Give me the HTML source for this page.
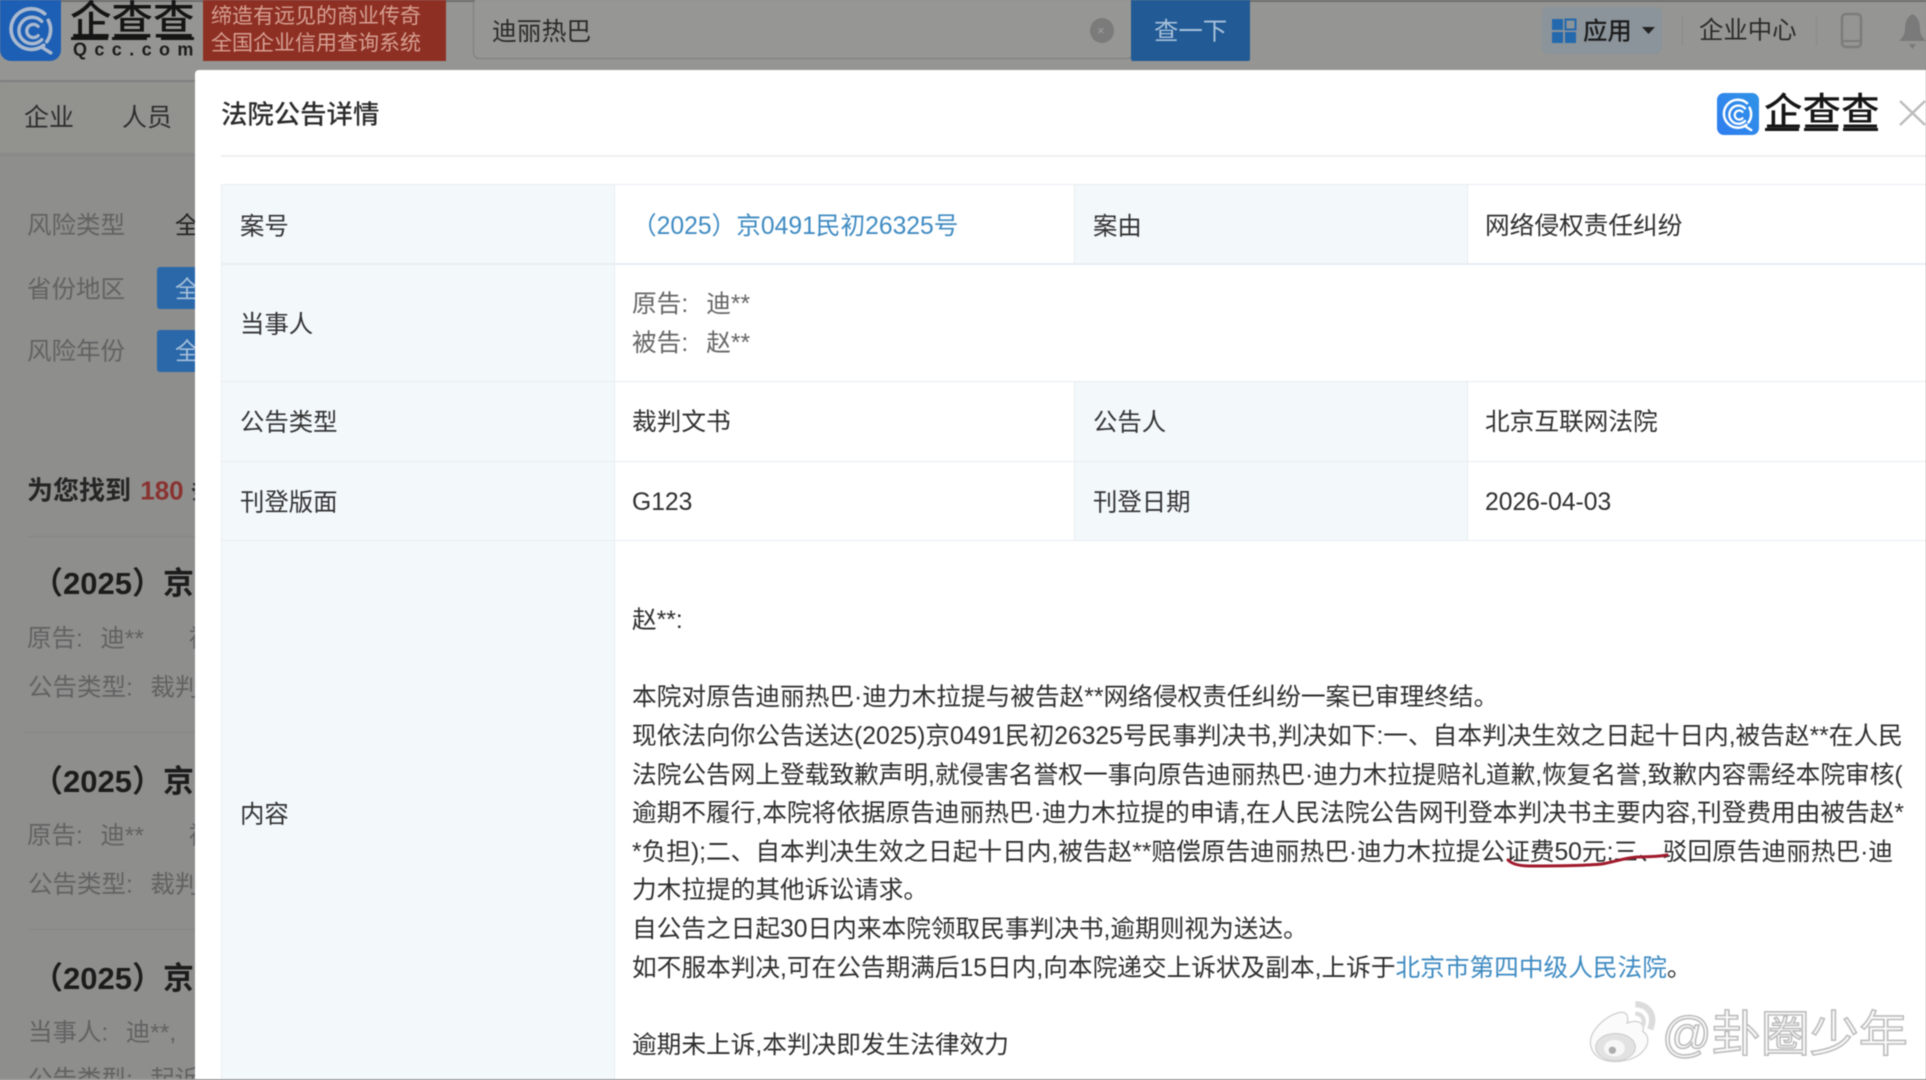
<!DOCTYPE html>
<html lang="zh-CN">
<head>
<meta charset="utf-8">
<title>法院公告详情</title>
<style>
html,body{margin:0;padding:0;}
body{width:1926px;height:1080px;overflow:hidden;position:relative;background:#8e8e8d;font-family:"Liberation Sans","Noto Sans CJK SC",sans-serif;}
#wrap{position:absolute;left:0;top:0;width:1926px;height:1080px;overflow:hidden;filter:blur(.45px);}
.t{position:absolute;white-space:nowrap;line-height:1;transform:translateY(calc(-50% + 4.5px));}
.b{position:absolute;}
.g{font-size:24.500px;color:#626262;}
.g i{font-style:normal;display:inline-block;width:17.500px;}
.h{font-size:31px;font-weight:700;color:#1c1c1c;}
.l{font-size:24.400px;color:#333;}
.c{font-size:24.680px;color:#2f2f2f;left:632px;}
.c i{font-style:normal;display:inline-block;width:18px;}
</style>
</head>
<body>
<svg width="0" height="0" style="position:absolute">
<symbol id="logo" viewBox="0 0 60 60">
<g fill="none" stroke-linecap="round">
<path d="M42 14.5A20 20 0 1 0 41 45.5 M45.5 21A20 20 0 0 1 44 42" stroke-width="3.6"/>
<path d="M40 48L48 53" stroke-width="3.4"/>
<path d="M39 22A13 13 0 1 0 39 40" stroke-width="3.4"/>
<path d="M35.500 27A6.500 6.500 0 1 0 35.500 36" stroke-width="3.2"/>
</g>
</symbol>
<linearGradient id="bl" x1="0" y1="1" x2="1" y2="0"><stop offset="0" stop-color="#2f7df0"/><stop offset="1" stop-color="#2f93e6"/></linearGradient>
</svg>
<div id="wrap">
<!-- background page -->
<div class="b" style="left:0;top:0;width:1926px;height:80px;background:#959593;"></div>
<div class="b" style="left:0;top:0;width:1926px;height:2px;background:#6f6f6f;"></div>
<div class="b" style="left:0;top:80px;width:1926px;height:2px;background:#7f7f7f;"></div>
<div class="b" style="left:0;top:82px;width:1926px;height:71px;background:#92928f;"></div>
<div class="b" style="left:0;top:153px;width:1926px;height:3px;background:#8a8a89;"></div>

<svg class="b" style="left:0;top:0;color:#b6c6dc" width="61" height="61" viewBox="0 0 60 60">
<rect x="0" y="-14" width="60" height="74" rx="11" fill="#1d5fb4"/>
<use href="#logo" stroke="#aab9cf" x="2" y="-1" width="60" height="60"/>
</svg>
<span class="t" style="left:70px;top:15.500px;font-size:41.500px;font-weight:500;color:#151515;">企查查</span>
<div class="b" style="left:71px;top:37px;width:37px;height:3px;background:#151515;"></div>
<div class="b" style="left:112px;top:37px;width:35px;height:3px;background:#151515;"></div>
<div class="b" style="left:161px;top:37px;width:33px;height:3px;background:#151515;"></div>
<span class="t" style="left:73px;top:44.500px;font-size:18px;font-weight:700;letter-spacing:7.400px;color:#1c1c1c;">Qcc.com</span>
<div class="b" style="left:203px;top:0;width:243px;height:61px;background:#8e2f23;"></div>
<span class="t" style="left:211px;top:12px;font-size:21px;color:#d6a092;">缔造有远见的商业传奇</span>
<span class="t" style="left:211px;top:39px;font-size:21px;color:#d6a092;">全国企业信用查询系统</span>
<div class="b" style="left:473px;top:-2px;width:660px;height:61px;box-sizing:border-box;border:1px solid #7f7f7f;border-radius:6px;background:#969694;"></div>
<span class="t" style="left:492px;top:29px;font-size:24.800px;color:#2a2a2a;">迪丽热巴</span>
<div class="b" style="left:1090px;top:18px;width:24px;height:25px;border-radius:50%;background:#7b7b7b;"></div>
<span class="t" style="left:1097px;top:25.500px;font-size:13px;color:#a0a0a0;">×</span>
<div class="b" style="left:1131px;top:0;width:119px;height:61px;background:#215a95;border-radius:0 0 2px 2px;"></div>
<span class="t" style="left:1154px;top:27.500px;font-size:24.400px;color:#a9c1da;">查一下</span>

<div class="b" style="left:1542px;top:7px;width:120px;height:47px;border-radius:6px;background:#8b949b;"></div>
<svg class="b" style="left:1551px;top:18px" width="26" height="25" viewBox="0 0 26 25">
<rect x="1" y="1" width="11" height="11" fill="#2468ad"/><rect x="14.500" y="1.500" width="10" height="10" fill="none" stroke="#2468ad" stroke-width="2"/>
<rect x="1" y="14" width="11" height="11" fill="#2468ad"/><rect x="14" y="14" width="11" height="11" fill="#2468ad"/>
</svg>
<span class="t" style="left:1583px;top:27.500px;font-size:24.400px;font-weight:500;color:#1c1c1c;">应用</span>
<svg class="b" style="left:1641px;top:26px" width="15" height="9"><path d="M1 1H14L7.500 8Z" fill="#222"/></svg>
<div class="b" style="left:1682px;top:16px;width:1px;height:30px;background:#8a8a8a;"></div>
<span class="t" style="left:1699px;top:26.500px;font-size:24.400px;color:#2b2b2b;">企业中心</span>
<div class="b" style="left:1816px;top:16px;width:1px;height:30px;background:#8a8a8a;"></div>
<svg class="b" style="left:1840px;top:12px" width="23" height="37" viewBox="0 0 23 37"><rect x="2" y="2" width="19" height="33" rx="4" fill="none" stroke="#7c7c7c" stroke-width="2.500"/><path d="M3 29H20" stroke="#7c7c7c" stroke-width="2"/></svg>
<svg class="b" style="left:1899px;top:13px" width="27" height="37" viewBox="0 0 27 37"><path d="M13.500 1C8 4 6 9 6 16C6 21 4 24 0 28H27C23 24 21 21 21 16C21 9 19 4 13.500 1ZM10 31H17L13.500 36Z" fill="#7a7a7a"/></svg>

<span class="t" style="left:24px;top:114px;font-size:25px;color:#2e2e2e;">企业</span>
<span class="t" style="left:122px;top:114px;font-size:25px;color:#2e2e2e;">人员</span>
<span class="t g" style="left:27px;top:222px;">风险类型</span>
<span class="t" style="left:175px;top:222px;font-size:24px;color:#222;">全</span>
<span class="t g" style="left:27px;top:286px;">省份地区</span>
<div class="b" style="left:157px;top:267px;width:40px;height:42px;border-radius:3px;background:#2a68a9;"></div>
<span class="t" style="left:175px;top:286px;font-size:24px;color:#a5bfda;">全</span>
<span class="t g" style="left:27px;top:348px;">风险年份</span>
<div class="b" style="left:157px;top:330px;width:40px;height:42px;border-radius:3px;background:#2a68a9;"></div>
<span class="t" style="left:175px;top:348px;font-size:24px;color:#a5bfda;">全</span>

<span class="t" style="left:27px;top:485.500px;font-size:26px;font-weight:700;color:#252525;">为您找到 <span style="color:#8a3330;margin-left:2px;">180</span> 条</span>
<div class="b" style="left:28px;top:536px;width:170px;height:1px;background:#858585;"></div>
<span class="t h" style="left:32px;top:578.500px;">（2025）京</span>
<span class="t g" style="left:27px;top:635px;">原告:<i></i>迪**</span>
<span class="t g" style="left:189px;top:635px;">被</span>
<span class="t g" style="left:28px;top:684px;">公告类型:<i></i>裁判</span>
<div class="b" style="left:25px;top:732px;width:170px;height:1px;background:#858585;"></div>
<span class="t h" style="left:32px;top:776.500px;">（2025）京</span>
<span class="t g" style="left:27px;top:832px;">原告:<i></i>迪**</span>
<span class="t g" style="left:189px;top:832px;">被</span>
<span class="t g" style="left:28px;top:881px;">公告类型:<i></i>裁判</span>
<div class="b" style="left:28px;top:929px;width:170px;height:1px;background:#858585;"></div>
<span class="t h" style="left:32px;top:973.500px;">（2025）京</span>
<span class="t g" style="left:28px;top:1029px;">当事人:<i></i>迪**,</span>
<span class="t g" style="left:28px;top:1076px;">公告类型:<i></i>起诉</span>

<!-- modal -->
<div class="b" style="left:195px;top:70px;width:1740px;height:1020px;background:#fff;border-radius:4px 0 0 0;overflow:hidden;"></div>
<span class="t" style="left:221px;top:109.500px;font-size:26.400px;font-weight:500;color:#2b2b2b;">法院公告详情</span>
<svg class="b" style="left:1717px;top:93px" width="42" height="42" viewBox="0 0 60 60">
<rect width="60" height="60" rx="10" fill="url(#bl)"/><use href="#logo" stroke="#fff" x="1" y="0" width="60" height="60"/>
</svg>
<span class="t" style="left:1764px;top:108.500px;font-size:38.500px;font-weight:500;color:#161616;">企查查</span>
<div class="b" style="left:1765px;top:128px;width:34px;height:3px;background:#161616;"></div>
<div class="b" style="left:1804px;top:128px;width:34px;height:3px;background:#161616;"></div>
<div class="b" style="left:1843px;top:128px;width:35px;height:3px;background:#161616;"></div>
<svg class="b" style="left:1898px;top:99px" width="28" height="27"><path d="M2 2L27 26M27 2L2 26" stroke="#bdbdbd" stroke-width="2.500"/></svg>
<div class="b" style="left:221px;top:155px;width:1705px;height:2px;background:#eeeeee;"></div>

<!-- table -->
<div class="b" style="left:221px;top:184px;width:393px;height:896px;background:#f3f8fb;"></div>
<div class="b" style="left:1075px;top:184px;width:392px;height:79px;background:#f3f8fb;"></div>
<div class="b" style="left:1075px;top:381px;width:392px;height:159px;background:#f3f8fb;"></div>
<div class="b" style="left:221px;top:184px;width:1705px;height:1px;background:#e8edf1;"></div>
<div class="b" style="left:221px;top:263px;width:1705px;height:2px;background:#e8edf1;"></div>
<div class="b" style="left:221px;top:381px;width:1705px;height:1px;background:#e8edf1;"></div>
<div class="b" style="left:221px;top:461px;width:1705px;height:1px;background:#e8edf1;"></div>
<div class="b" style="left:221px;top:540px;width:1705px;height:1px;background:#e8edf1;"></div>
<div class="b" style="left:221px;top:184px;width:1px;height:896px;background:#e8edf1;"></div>
<div class="b" style="left:614px;top:184px;width:1px;height:896px;background:#e8edf1;"></div>
<div class="b" style="left:1074px;top:184px;width:1px;height:79px;background:#e8edf1;"></div>
<div class="b" style="left:1467px;top:184px;width:1px;height:79px;background:#e8edf1;"></div>
<div class="b" style="left:1074px;top:381px;width:1px;height:159px;background:#e8edf1;"></div>
<div class="b" style="left:1467px;top:381px;width:1px;height:159px;background:#e8edf1;"></div>

<span class="t l" style="left:240px;top:223px;">案号</span>
<span class="t l" style="left:240px;top:321px;">当事人</span>
<span class="t l" style="left:240px;top:419px;">公告类型</span>
<span class="t l" style="left:240px;top:499px;">刊登版面</span>
<span class="t l" style="left:240px;top:811px;">内容</span>
<span class="t l" style="left:1093px;top:223px;">案由</span>
<span class="t l" style="left:1093px;top:419px;">公告人</span>
<span class="t l" style="left:1093px;top:499px;">刊登日期</span>

<span class="t c" style="top:223px;color:#3f8bc2;">（2025）京0491民初26325号</span>
<span class="t c" style="top:301px;color:#666;">原告:<i></i>迪**</span>
<span class="t c" style="top:340px;color:#666;">被告:<i></i>赵**</span>
<span class="t c" style="top:419px;">裁判文书</span>
<span class="t c" style="top:499px;">G123</span>
<span class="t c" style="left:1485px;top:223px;">网络侵权责任纠纷</span>
<span class="t c" style="left:1485px;top:419px;">北京互联网法院</span>
<span class="t c" style="left:1485px;top:499px;">2026-04-03</span>

<span class="t c" style="top:617px;">赵**:</span>
<span class="t c" style="top:694px;">本院对原告迪丽热巴·迪力木拉提与被告赵**网络侵权责任纠纷一案已审理终结。</span>
<span class="t c" style="top:733px;">现依法向你公告送达(2025)京0491民初26325号民事判决书,判决如下:一、自本判决生效之日起十日内,被告赵**在人民</span>
<span class="t c" style="top:772px;">法院公告网上登载致歉声明,就侵害名誉权一事向原告迪丽热巴·迪力木拉提赔礼道歉,恢复名誉,致歉内容需经本院审核(</span>
<span class="t c" style="top:810px;">逾期不履行,本院将依据原告迪丽热巴·迪力木拉提的申请,在人民法院公告网刊登本判决书主要内容,刊登费用由被告赵*</span>
<span class="t c" style="top:849px;">*负担);二、自本判决生效之日起十日内,被告赵**赔偿原告迪丽热巴·迪力木拉提公证费50元;三、驳回原告迪丽热巴·迪</span>
<span class="t c" style="top:887px;">力木拉提的其他诉讼请求。</span>
<span class="t c" style="top:926px;">自公告之日起30日内来本院领取民事判决书,逾期则视为送达。</span>
<span class="t c" style="top:965px;">如不服本判决,可在公告期满后15日内,向本院递交上诉状及副本,上诉于<span style="color:#3f8bc2;">北京市第四中级人民法院</span>。</span>
<span class="t c" style="top:1042px;">逾期未上诉,本判决即发生法律效力</span>

<svg class="b" style="left:1502px;top:850px" width="175" height="24"><path d="M6 10C10 14 18 16 28 16C50 16 80 16 100 14C112 12 122 8 135 7C145 6.500 156 7 165 5" fill="none" stroke="#a01a2c" stroke-width="3" stroke-linecap="round"/></svg>

<!-- watermark -->
<svg class="b" style="left:1585px;top:998px" width="84" height="69" viewBox="0 0 80 66">
<path d="M5 44C4 32 18 18 32 14C40 12 42 18 40 24C50 20 58 24 55 32C62 36 62 46 52 54C40 63 8 66 5 44Z" fill="#fbfbfb" stroke="#cfcfcf" stroke-width="1.200"/>
<ellipse cx="29" cy="47" rx="19" ry="13" fill="#e2e2e2" stroke="#cdcdcd"/>
<ellipse cx="28" cy="48" rx="10" ry="8" fill="#f7f7f7"/>
<circle cx="26" cy="50" r="3.500" fill="#aeaeae"/>
<path d="M48 6C60 6 68 16 62 30" fill="none" stroke="#dcdcdc" stroke-width="6"/>
<path d="M48 15C54 15 58 20 55 27" fill="none" stroke="#dcdcdc" stroke-width="4"/>
</svg>
<span class="t" style="left:1662px;top:1030.500px;font-size:49px;color:#fafafa;-webkit-text-stroke:1.600px #bdbdbd;">@卦圈少年</span>

<div class="b" style="left:0;top:1079px;width:1926px;height:1px;background:#a8a8a8;"></div>
</div>
</body>
</html>
